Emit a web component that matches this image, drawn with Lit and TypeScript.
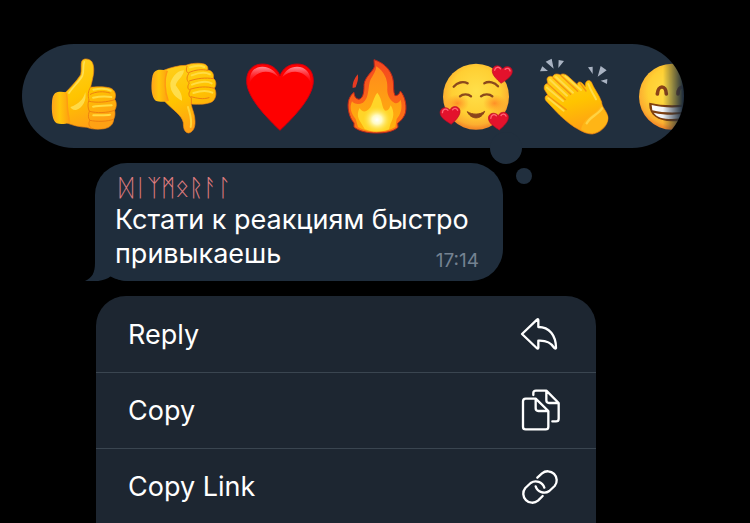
import { LitElement, html, css, svg } from "lit";
import { customElement } from "lit/decorators.js";

const gradients = svg`
  <defs>
    <linearGradient id="hand" x1="0" y1="0" x2="0.3" y2="1">
      <stop offset="0" stop-color="#ffd01f" /><stop offset="0.55" stop-color="#ffc400" /><stop offset="1" stop-color="#ffa114" />
    </linearGradient>
    <linearGradient id="cuff" x1="0" y1="0" x2="1" y2="0">
      <stop offset="0" stop-color="#ffa41c" /><stop offset="0.45" stop-color="#ffc70a" /><stop offset="1" stop-color="#ff9f10" />
    </linearGradient>
    <radialGradient id="face" cx="0.5" cy="0.42" r="0.56">
      <stop offset="0" stop-color="#ffe04a" /><stop offset="0.65" stop-color="#ffcf33" /><stop offset="0.9" stop-color="#fcae30" /><stop offset="1" stop-color="#f58c28" />
    </radialGradient>
    <radialGradient id="blush">
      <stop offset="0" stop-color="#ff7a22" stop-opacity="0.75" /><stop offset="1" stop-color="#ff8c22" stop-opacity="0" />
    </radialGradient>
    <linearGradient id="shine" x1="0" y1="0" x2="0" y2="1">
      <stop offset="0" stop-color="#ff8d96" /><stop offset="1" stop-color="#ff1020" stop-opacity="0.2" />
    </linearGradient>
    <linearGradient id="flame" x1="0" y1="0" x2="0" y2="1">
      <stop offset="0" stop-color="#f4471f" /><stop offset="1" stop-color="#ff7a14" />
    </linearGradient>
    <linearGradient id="flameMid" x1="0" y1="0" x2="0" y2="1">
      <stop offset="0" stop-color="#ff8a1c" /><stop offset="1" stop-color="#ffb20c" />
    </linearGradient>
    <radialGradient id="glow">
      <stop offset="0" stop-color="#ffffff" /><stop offset="0.35" stop-color="#fffac0" /><stop offset="1" stop-color="#ffe53a" stop-opacity="0" />
    </radialGradient>
    <linearGradient id="teeth" x1="0" y1="0" x2="1" y2="0">
      <stop offset="0" stop-color="#ffffff" /><stop offset="1" stop-color="#cfd4de" />
    </linearGradient>
  </defs>`;

const smallHeart = (transform: string) => svg`
  <g transform=${transform}>
    <path d="M0 28C-14 17-31 6-30-10C-29-24-10-29 0-15C8-29 28-26 30-11C31 5 12 19 0 28Z" fill="#e3122c" stroke="#b80d26" stroke-width="2" />
    <path d="M-23-9C-22-19-12-22-6-15M8-15C13-21 21-19 23-12" fill="none" stroke="#ff6677" stroke-width="4" stroke-linecap="round" />
  </g>`;

const reactions = [
  {
    name: "Thumbs up",
    box: "60 27 294 312",
    art: svg`
      ${gradients}
      <path d="M150 174C166 157 186 137 197 119C201 106 196 86 201 77C207 69 221 71 229 78C239 90 237 115 233 130C231 141 228 149 227 157C246 154 279 155 290 161C302 168 304 182 299 193C306 202 305 217 299 226C301 236 300 246 296 253C295 269 284 278 268 281C248 284 226 282 216 277C192 276 174 271 156 264Z" fill="url(#hand)" stroke="#f58a10" stroke-width="2" />
      <path d="M128 171C136 169 146 170 154 172C159 198 160 232 163 263C153 267 136 269 125 265C112 257 109 230 111 202C112 184 117 173 128 171Z" fill="url(#cuff)" />
      <path d="M154 174C160 197 154 219 161 242L164 262" fill="none" stroke="#ff9d12" stroke-width="4" />
      <path d="M208 80C203 94 208 107 202 123C190 143 174 155 162 174" fill="none" stroke="#ffdf55" stroke-width="5" stroke-linecap="round" />
      <path d="M166 216C190 208 205 194 211 171C215 195 204 219 183 225C174 226 168 221 166 216Z" fill="#ffe45d" opacity="0.75" />
      <path d="M226 157C219 170 218 181 222 195C217 208 219 220 223 229C218 242 220 251 225 256C219 266 222 274 229 279M226 178C242 169 266 168 285 174M222 199C245 204 276 202 299 194M223 229C246 235 276 234 299 226M224 256C248 261 275 260 296 253" fill="none" stroke="#ed8010" stroke-width="3" stroke-linecap="round" />
      <path d="M235 164C255 160 276 161 287 167M234 188C254 184 276 184 289 186M234 215C254 211 276 212 290 211M235 241C253 240 274 241 285 239" fill="none" stroke="#ffdc43" stroke-width="6" stroke-linecap="round" />`,
  },
  {
    name: "Thumbs down",
    box: "354 27 294 312",
    art: svg`
      <path d="M446 106C468 97 492 91 513 91C526 85 553 82 570 88C578 92 580 99 578 105C590 106 598 116 595 130C604 137 605 151 598 160C605 171 604 187 595 197C584 208 552 209 528 207C532 224 540 240 540 258C541 278 534 291 521 294C508 292 505 280 505 263C502 242 472 223 450 200Z" fill="url(#hand)" stroke="#f58a10" stroke-width="2" />
      <path d="M426 106C435 103 446 105 458 107C448 130 448 169 459 198C448 202 432 201 422 197C410 186 407 160 411 131C413 116 418 108 426 106Z" fill="url(#cuff)" />
      <path d="M457 108C447 132 449 171 460 198" fill="none" stroke="#ff9812" stroke-width="4" />
      <path d="M466 144C474 119 492 106 507 106C505 126 486 134 482 151C492 164 503 179 501 197C486 190 464 174 466 144Z" fill="#ffe45d" opacity="0.8" />
      <path d="M516 94C511 107 516 112 521 116C512 130 517 138 523 144C515 156 519 163 526 167C517 176 524 188 529 188L529 206M521 113C541 104 560 102 578 106M523 138C546 130 571 127 595 131M525 163C550 155 575 153 598 160M528 185C546 190 564 194 582 188" fill="none" stroke="#ed8010" stroke-width="3" stroke-linecap="round" />
      <path d="M525 97C541 91 558 91 568 96M530 121C551 113 573 112 585 118M531 149C552 141 577 138 590 145M535 174C556 167 579 166 592 173" fill="none" stroke="#ffdc43" stroke-width="6" stroke-linecap="round" />
      <path d="M519 216C525 238 532 252 527 276" fill="none" stroke="#ffd63a" stroke-width="6" stroke-linecap="round" />`,
  },
  {
    name: "Heart",
    box: "-12 27 294 312",
    art: svg`
      <path d="M135 286C105 257 35 190 35 139C34 104 56 87 82 87C108 87 126 100 135 122C144 100 161 87 187 87C215 87 235 105 235 138C235 190 165 257 135 286Z" fill="#fe0000" stroke="#c90012" stroke-width="3" />
      <path d="M44 143C43 111 59 94 83 95C106 96 122 109 130 126C104 102 65 104 44 143Z" fill="url(#shine)" />
      <path d="M142 126C150 106 166 95 186 95C211 95 228 113 227 143C210 105 169 101 142 126Z" fill="url(#shine)" />`,
  },
  {
    name: "Fire",
    box: "282 27 294 312",
    art: svg`
      <path d="M417 74C452 85 472 111 475 139C477 155 474 169 480 182C490 182 493 176 496 168C511 184 518 219 509 240C504 249 499 257 488 265L489 277C474 290 451 294 425 294C397 294 372 289 357 276L357 264C341 246 335 213 342 193C345 184 352 175 357 172C357 184 363 192 372 193C387 189 387 163 387 149C389 125 417 107 418 94Z" fill="url(#flame)" stroke="#bb261d" stroke-width="3" />
      <path d="M368 118C372 132 366 145 362 157L353 159C352 143 358 132 368 118Z" fill="#e63a22" />
      <path d="M424 94C447 110 458 132 457 157C455 178 463 195 479 204C486 207 493 202 497 194C504 220 496 239 485 252L481 276C452 294 398 294 369 276L362 252C347 234 343 217 351 199C358 208 371 210 384 203C404 190 398 151 407 133C415 119 423 109 424 94Z" fill="url(#flameMid)" />
      <path d="M427 173C444 196 439 217 450 227C459 229 464 220 467 211C480 232 475 251 467 265L462 283C442 292 409 292 389 282L374 257C365 242 369 228 374 219C379 228 387 232 395 227C414 217 412 191 427 173Z" fill="#ffd528" />
      <ellipse cx="426" cy="254" rx="42" ry="39" fill="url(#glow)" />`,
  },
  {
    name: "Smiling face with hearts",
    box: "6 27 294 312",
    art: svg`
      <circle cx="153" cy="185" r="99" fill="url(#face)" />
      <ellipse cx="97" cy="205" rx="35" ry="27" fill="url(#blush)" />
      <ellipse cx="209" cy="205" rx="35" ry="27" fill="url(#blush)" />
      <path d="M86 155C97 142 114 138 128 145M178 145C192 137 209 142 219 154M105 184C113 176 130 176 138 184M168 184C177 176 194 176 202 184" fill="none" stroke="#8b491c" stroke-width="7" stroke-linecap="round" />
      <path d="M127 230C142 240 165 240 179 229C169 255 138 255 127 230Z" fill="#8b451b" stroke="#8b451b" stroke-width="3" stroke-linejoin="round" />
      ${smallHeart("translate(231 117) rotate(6)")}
      ${smallHeart("translate(76 240) rotate(-5)")}
      ${smallHeart("translate(221 257) rotate(-4)")}`,
  },
  {
    name: "Clapping hands",
    box: "-15 27 294 312",
    art: svg`
      <path d="M47 80L65 71L71 101ZM86 75L102 78L85 99ZM37 94L54 108L30 109ZM174 97L188 95L188 117ZM212 93L230 106L203 125ZM212 137L232 132L231 147Z" fill="#a9b3c2" />
      <path d="M166 146C170 134 179 134 184 141C191 160 208 180 215 201C214 216 234 231 234 250C233 275 209 294 187 297C166 297 151 286 133 276C113 263 94 246 77 228L48 197C42 189 47 179 54 181L43 163C41 151 47 145 54 147L51 134C51 125 60 121 68 126C70 116 82 115 91 120C97 114 107 117 114 124L142 149C142 139 151 139 157 145L166 155Z" fill="url(#hand)" stroke="#f58a10" stroke-width="2" />
      <path d="M54 147L106 194M52 181L109 224M69 128L122 178M92 121L143 169M151 145L168 168" fill="none" stroke="#f39212" stroke-width="4" stroke-linecap="round" />
      <path d="M60 134L111 182M51 158L99 198M55 190L101 227M78 126L129 173M106 124L153 165M175 147C181 166 191 178 198 193" fill="none" stroke="#ffdb4b" stroke-width="6" stroke-linecap="round" />
      <path d="M214 204C209 226 187 237 174 249C162 259 156 269 153 283C166 294 184 297 201 291C220 281 235 264 234 247C229 230 216 221 214 204Z" fill="#ffb516" />
      <path d="M216 220C203 239 180 246 170 265" fill="none" stroke="#ffd343" stroke-width="7" stroke-linecap="round" />`,
  },
  {
    name: "Beaming face",
    box: "279 27 294 312",
    art: svg`
      <circle cx="426" cy="185" r="99" fill="url(#face)" />
      <path d="M382 177C384 149 408 149 409 177M444 177C444 149 470 149 471 177" fill="none" stroke="#8b4218" stroke-width="11" stroke-linecap="round" />
      <path d="M358 203C398 213 454 213 494 203C497 238 472 259 426 259C381 259 354 237 358 203Z" fill="#81400f" />
      <path d="M365 210C402 220 450 220 487 210L485 226C448 235 404 235 367 226ZM371 233C405 241 447 241 481 233C471 247 453 252 426 252C399 252 380 247 371 233Z" fill="url(#teeth)" />`,
  },
];

const actions = [
  {
    label: "Reply",
    box: "84 66 132 132",
    art: svg`<path d="M96 132L141 89Q145 86 145 91V111C178 111 198 136 198 174Q197 178 192 173C182 156 164 151 145 152V173Q144 178 140 174Z" />`,
  },
  {
    label: "Copy",
    box: "84 294 132 132",
    art: svg`<path d="M107 323H137L175 360V407Q175 415 167 415H107Q99 415 99 407V331Q99 323 107 323ZM137 324V352Q137 360 145 360H174M130 312V306Q130 299 138 299H169L206 336V383Q206 391 198 391H187M169 300V328Q169 336 177 336H205" />`,
  },
  {
    label: "Copy Link",
    box: "84 522 132 132",
    art: svg`<path d="M142 560L156 547A27 27 0 0 1 194 585L178 600A27 27 0 0 1 137 586M158 615L144 629A27 27 0 0 1 106 591L122 576A27 27 0 0 1 163 590" />`,
  },
];

@customElement("app-root")
export class AppRoot extends LitElement {
  static styles = css`
    :host {
      display: block;
      box-sizing: border-box;
      min-height: 100vh;
      background: #000;
      color: #fff;
      font-family: Inter, "Noto Sans", sans-serif;
      font-size: 27px;
      overflow: hidden;
    }
    * {
      box-sizing: border-box;
    }
    button {
      border: 0;
      padding: 0;
      background: none;
      color: inherit;
      font: inherit;
      cursor: pointer;
    }
    svg {
      display: block;
    }
    .page {
      display: flex;
      flex-direction: column;
      align-items: flex-start;
      gap: 15px;
      padding: 44px 66px 0 22px;
      height: 100vh;
      overflow: hidden;
    }
    .picker {
      position: relative;
      flex: none;
      width: 100%;
      max-width: 662px;
    }
    .picker::before,
    .picker::after {
      content: "";
      position: absolute;
      border-radius: 50%;
      background: #212f3e;
    }
    .picker::before {
      right: 162px;
      bottom: -16px;
      width: 32px;
      height: 32px;
    }
    .picker::after {
      right: 152px;
      bottom: -36px;
      width: 16px;
      height: 16px;
    }
    .strip {
      display: flex;
      overflow: hidden;
      padding-left: 13px;
      border-radius: 52px;
      background: #212f3e;
    }
    .reaction {
      flex: none;
      width: 98px;
      height: 104px;
    }
    .reaction svg {
      width: 98px;
      height: 104px;
    }
    .reaction:last-child {
      mask-image: linear-gradient(to right, #000 40px, transparent 60px);
    }
    .message {
      position: relative;
      z-index: 0;
      flex: none;
      margin-left: 73px;
      width: 408px;
      max-width: 100%;
      padding: 10px 24px 10px 20px;
      border-radius: 32px;
      background: #1f2d3c;
    }
    .tail {
      position: absolute;
      z-index: -1;
      left: -10px;
      bottom: 0;
      width: 44px;
      height: 40px;
      fill: #1f2d3c;
    }
    .author {
      padding-left: 4px;
      font-family: "DejaVu Sans", "Noto Sans", sans-serif;
      font-size: 24px;
      line-height: 30px;
      color: #e07d80;
    }
    .body {
      margin: 0;
      line-height: 34px;
    }
    .time {
      float: right;
      margin-top: 14px;
      font-size: 19px;
      line-height: 20px;
      color: #748291;
    }
    .menu {
      flex: none;
      margin-left: 74px;
      width: 100%;
      max-width: 500px;
      overflow: hidden;
      border-radius: 30px 30px 0 0;
      background: #1d2631;
    }
    .action {
      display: flex;
      align-items: center;
      justify-content: space-between;
      width: 100%;
      height: 76px;
      padding: 0 34px 0 32px;
    }
    .action + .action {
      border-top: 1px solid #3a4550;
    }
    .action svg {
      width: 44px;
      height: 44px;
      fill: none;
      stroke: #fff;
      stroke-width: 7;
      stroke-linecap: round;
      stroke-linejoin: round;
    }
  `;

  render() {
    return html`
      <main class="page">
        <div class="picker">
          <div class="strip">
            ${reactions.map(
              (r) => html`<button class="reaction" aria-label=${r.name}>
                <svg viewBox=${r.box} aria-hidden="true">${r.art}</svg>
              </button>`
            )}
          </div>
        </div>
        <article class="message">
          <svg class="tail" viewBox="0 0 44 40" aria-hidden="true">
            <path d="M10 0V22C10 32 7 37 0 40C11 41 20 40 26 35C31 38 37 40 44 40V0Z" />
          </svg>
          <div class="author">ᛞᛁᛉᛗᛟᚱᚨᛚ</div>
          <p class="body">
            Кстати к реакциям быстро привыкаешь
            <time class="time">17:14</time>
          </p>
        </article>
        <nav class="menu" aria-label="Message actions">
          ${actions.map(
            (a) => html`<button class="action">
              <span>${a.label}</span>
              <svg viewBox=${a.box} aria-hidden="true">${a.art}</svg>
            </button>`
          )}
        </nav>
      </main>
    `;
  }
}
